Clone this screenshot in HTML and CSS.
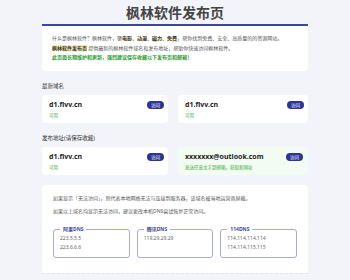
FILE: index.html
```html
<!DOCTYPE html>
<html lang="zh-CN">
<head>
    <meta charset="UTF-8">
    <meta name="viewport" content="width=device-width, initial-scale=1.0">
    <title>枫林软件发布页</title>
    <link rel="stylesheet" href="styles.css">
</head>
<body>
    <div class="container">
        <h1>枫林软件发布页</h1>

        <div class="intro">
            <p>什么是枫林软件？枫林软件，聚<b class="hl">电影</b>、<b class="hl">动漫</b>、<b class="hl">磁力</b>、<b class="hl">免费</b>，帮你找到免费、安全、高质量的的资源网站。</p>
            <p><b class="mark">枫林软件发布页</b> 提供最新的枫林软件域名和发布地址，帮助你快速访问枫林软件。</p>
            <p class="notice">此页面长期维护和更新，强烈建议保存收藏以下发布页和邮箱！</p>
        </div>

        <div class="section-title">最新域名</div>
        <div class="cards">
            <div class="card">
                <div class="card-info">
                    <div class="domain">d1.flvv.cn</div>
                    <div class="status">可用</div>
                </div>
                <a class="visit" href="#">访问</a>
            </div>
            <div class="card">
                <div class="card-info">
                    <div class="domain">d1.flvv.cn</div>
                    <div class="status">可用</div>
                </div>
                <a class="visit" href="#">访问</a>
            </div>
        </div>

        <div class="section-title">发布地址(请保存收藏)</div>
        <div class="cards">
            <div class="card">
                <div class="card-info">
                    <div class="domain">d1.flvv.cn</div>
                    <div class="status">可用</div>
                </div>
                <a class="visit" href="#">访问</a>
            </div>
            <div class="card card-mail">
                <div class="card-info">
                    <div class="domain">xxxxxxx@outlook.com</div>
                    <div class="status">发送任意文字到邮箱，获取新网址</div>
                </div>
                <a class="visit" href="#">访问</a>
            </div>
        </div>

        <div class="help">
            <p>如果显示「无法访问」，则代表本地网络无法与连接到服务器，该域名被当地运营商屏蔽。</p>
            <p>如果以上域名均显示无法访问，建议更改本机DNS尝试恢复正常访问。</p>
            <div class="dns-list">
                <fieldset class="dns">
                    <legend>阿里DNS</legend>
                    <div>223.5.5.5</div>
                    <div>223.6.6.6</div>
                </fieldset>
                <fieldset class="dns">
                    <legend>腾讯DNS</legend>
                    <div>119.29.29.29</div>
                </fieldset>
                <fieldset class="dns">
                    <legend>114DNS</legend>
                    <div>114.114.114.114</div>
                    <div>114.114.115.115</div>
                </fieldset>
            </div>
        </div>
        <div class="divider"></div>
    </div>
</body>
</html>
```

FILE: styles.css
```css
body {
    margin: 0;
    background-color: #f3f4f9;
    font-family: "Noto Sans", "Noto Sans CJK SC", sans-serif;
    color: #555;
}
.container {
    width: 266px;
    margin: 0 auto;
}
h1 {
    margin: 0;
    padding-top: 4px;
    height: 20px;
    line-height: 18px;
    font-size: 14px;
    text-align: center;
    color: #444;
}
.intro {
    background-color: white;
    border-top: 2px solid #3e4799;
    border-radius: 0 0 4px 4px;
    padding: 8px 10px 8px;
    font-size: 5px;
    line-height: 9.5px;
}
.intro p {
    margin: 0;
}
.hl {
    color: #333;
    background: linear-gradient(transparent 50%, #fdf0a6 50%);
}
.mark {
    color: #333;
    background-color: #fdf0a6;
}
.notice {
    color: #2a9c2a;
    font-weight: bold;
}
.section-title {
    font-size: 5.5px;
    color: #333;
    margin: 11px 0 0;
    height: 13px;
    line-height: 8px;
}
.cards {
    display: grid;
    grid-template-columns: 126px 130px;
    gap: 10px;
}
.card {
    background-color: white;
    border-radius: 4px;
    height: 28px;
    padding: 0 4px 0 7px;
    display: flex;
    align-items: flex-start;
    justify-content: space-between;
    box-sizing: border-box;
}
.card-mail {
    background-color: #f3fcf3;
    padding-right: 5px;
}
.domain {
    font-size: 7px;
    font-weight: bold;
    color: #222;
    margin-top: 5px;
    line-height: 9px;
}
.status {
    font-size: 4.5px;
    color: #3aa63a;
    margin-top: 3px;
    line-height: 6px;
}
.visit {
    margin-top: 6px;
    background-color: #2b3592;
    color: white;
    font-size: 4.5px;
    text-decoration: none;
    border-radius: 4px;
    width: 17px;
    height: 8px;
    line-height: 8px;
    text-align: center;
}
.help {
    margin-top: 10px;
    background-color: white;
    border-radius: 4px 4px 0 0;
    padding: 9px 11px 15px;
    font-size: 5px;
    line-height: 8px;
}
.help p {
    margin: 0 0 5px;
}
.dns-list {
    display: grid;
    grid-template-columns: repeat(3, 1fr);
    gap: 7px;
    margin-top: 12px;
}
.dns {
    margin: 0;
    border: 1px solid #a7aadb;
    border-radius: 3px;
    padding: 2px 6px 5px;
    height: 31px;
    box-sizing: border-box;
    font-size: 5px;
    line-height: 9px;
    color: #666;
}
.dns legend {
    font-weight: bold;
    color: #3e4799;
    padding: 0 3px;
    line-height: 5px;
}
.divider {
    border-top: 1px dashed #dfe1ea;
}
```
